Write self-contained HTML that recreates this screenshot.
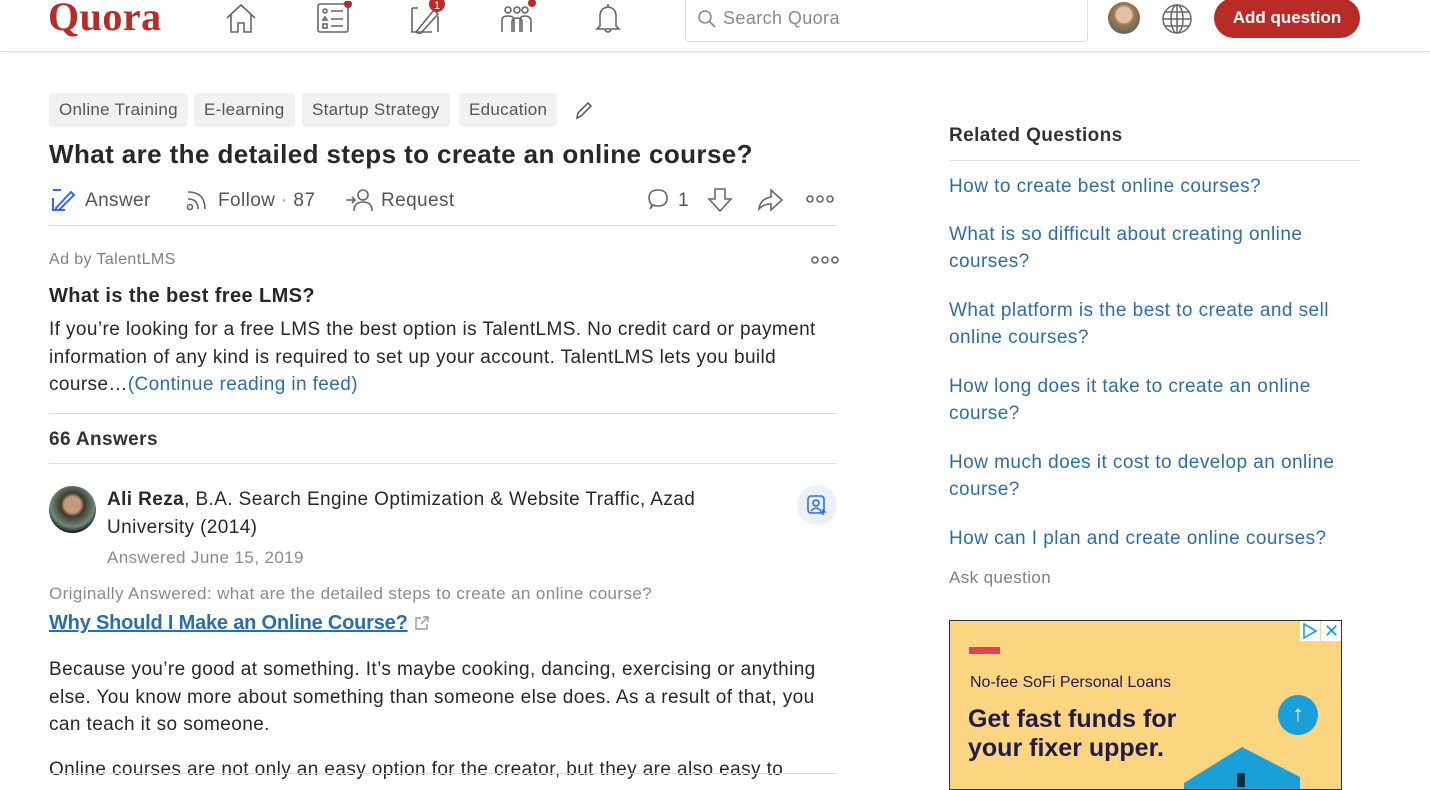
<!DOCTYPE html>
<html><head><meta charset="utf-8"><style>
*{box-sizing:border-box;margin:0;padding:0}
body{width:1430px;height:778px;overflow:hidden;background:#fff;font-family:"Liberation Sans",sans-serif;color:#282829;position:relative}
.a{position:absolute;white-space:nowrap}
.hdr{position:absolute;left:0;top:0;width:1430px;height:52px;border-bottom:1px solid #dedede;box-shadow:0 2px 3px rgba(0,0,0,.05);background:#fff}
.tag{position:absolute;top:93px;height:34px;background:#f1f1f2;border-radius:4px;font-size:17px;color:#555;line-height:34px;padding:0 10px;letter-spacing:0.3px}
.rq{position:absolute;left:949px;font-size:19px;color:#2b6dad;line-height:27px;width:400px;letter-spacing:0.45px}
.hr{position:absolute;height:1px;background:#dedede}
.t{letter-spacing:0.4px}
svg{position:absolute}
</style></head><body>
<div class="hdr"></div>
<div class="a" style="left:48px;top:-7px;font-family:'Liberation Serif',serif;font-weight:bold;font-size:40px;color:#b92b27;letter-spacing:0.5px">Quora</div>
<svg style="left:224px;top:2px" width="34" height="32" viewBox="0 0 34 32" fill="none" stroke="#666" stroke-width="1.6"><path d="M3 16 L17 3 L31 16 M7 12 V30 H14 V21 H20 V30 H27 V12"/></svg>
<svg style="left:316px;top:1px" width="36" height="34" viewBox="0 0 36 34" fill="none" stroke="#666" stroke-width="1.6"><rect x="2" y="3" width="30" height="28" rx="2"/><circle cx="9" cy="10" r="2"/><path d="M7 19h4l-2-3z"/><rect x="7" y="23" width="4" height="4"/><path d="M15 10h12M15 18h12M15 25h12"/><circle cx="32" cy="3" r="4" fill="#b92b27" stroke="none"/></svg>
<svg style="left:408px;top:0" width="42" height="34" viewBox="0 0 42 34" fill="none" stroke="#666" stroke-width="1.6"><path d="M4 8v24h20M4 8h6M30 16v16"/><path d="M8 32 L26 10 L30 14 L12 34z"/><circle cx="29" cy="4" r="8" fill="#b92b27" stroke="none"/><text x="26" y="9" font-size="11" fill="#fff" stroke="none" font-family="Liberation Sans">1</text></svg>
<svg style="left:499px;top:0" width="42" height="34" viewBox="0 0 42 34" fill="none" stroke="#666" stroke-width="1.6"><circle cx="9" cy="10" r="3"/><circle cx="18" cy="10" r="3"/><circle cx="26" cy="10" r="3"/><path d="M3 32V20q0-4 6-4t6 4v12M13 32V22q0-4 5-4t5 4v10M21 32V20q0-4 5-4t6 4v12"/><circle cx="33" cy="3" r="4" fill="#b92b27" stroke="none"/></svg>
<svg style="left:592px;top:2px" width="32" height="32" viewBox="0 0 32 32" fill="none" stroke="#666" stroke-width="1.6"><path d="M8 24V14q0-8 8-9 8 1 8 9v10l3 3H5z"/><path d="M13 28q3 4 6 0"/><path d="M16 2v3"/></svg>
<div class="a" style="left:685px;top:-4px;width:403px;height:46px;border:1px solid #dedede;border-radius:4px"></div>
<svg style="left:697px;top:9px" width="20" height="20" viewBox="0 0 20 20" fill="none" stroke="#888" stroke-width="1.6"><circle cx="8" cy="8" r="6"/><path d="M12.5 12.5L18 18"/></svg>
<div class="a t" style="left:723px;top:8px;font-size:18px;color:#8a8a8a">Search Quora</div>
<div class="a" style="left:1108px;top:2px;width:32px;height:32px;border-radius:50%;background:radial-gradient(circle at 50% 40%,#e3c1a5 0 30%,#a47650 40%,#4f6d62 80%)"></div>
<svg style="left:1161px;top:3px" width="32" height="32" viewBox="0 0 32 32" fill="none" stroke="#666" stroke-width="1.5"><circle cx="16" cy="16" r="14"/><ellipse cx="16" cy="16" rx="6" ry="14"/><path d="M2 16h28M4 9h24M4 23h24M16 2v28"/></svg>
<div class="a" style="left:1214px;top:-2px;width:146px;height:40px;border-radius:20px;background:#b92b27;color:#fff;font-weight:bold;font-size:17px;text-align:center;line-height:40px">Add question</div>

<div class="tag" style="left:49px">Online Training</div>
<div class="tag" style="left:194px">E-learning</div>
<div class="tag" style="left:302px">Startup Strategy</div>
<div class="tag" style="left:459px">Education</div>
<svg style="left:574px;top:100px" width="20" height="20" viewBox="0 0 20 20" fill="none" stroke="#555" stroke-width="1.5"><path d="M3 18l1-5L14 3l3 3L7 16z"/></svg>
<div class="a" style="left:49px;top:139px;font-size:26px;font-weight:bold;color:#282829;letter-spacing:0.4px">What are the detailed steps to create an online course?</div>

<svg style="left:51px;top:188px" width="26" height="24" viewBox="0 0 26 24" fill="none" stroke="#2e69ff" stroke-width="2"><path d="M2 10V22H14M2 2h8"/><path d="M5 20L20 4l3 3L8 22H5z"/></svg>
<div class="a t" style="left:85px;top:190px;font-size:19px;color:#555">Answer</div>
<svg style="left:185px;top:188px" width="24" height="24" viewBox="0 0 24 24" fill="none" stroke="#666" stroke-width="1.6"><circle cx="5" cy="19" r="2.5"/><path d="M3 11q10 0 10 10M3 4q17 0 17 17"/></svg>
<div class="a t" style="left:218px;top:190px;font-size:19px;color:#555">Follow <span style="color:#999">·</span> 87</div>
<svg style="left:345px;top:188px" width="28" height="24" viewBox="0 0 28 24" fill="none" stroke="#666" stroke-width="1.6"><path d="M1 12h9M7 9l3 3-3 3"/><circle cx="18" cy="7" r="5"/><path d="M9 23q0-9 9-9t9 9"/></svg>
<div class="a t" style="left:381px;top:190px;font-size:19px;color:#555">Request</div>
<svg style="left:646px;top:188px" width="26" height="24" viewBox="0 0 26 24" fill="none" stroke="#666" stroke-width="1.6"><path d="M4 21l2-4q-3-3-3-7 0-8 9-8t9 8-9 8q-3 0-5-1z"/></svg>
<div class="a" style="left:678px;top:190px;font-size:19px;color:#555">1</div>
<svg style="left:706px;top:187px" width="28" height="26" viewBox="0 0 28 26" fill="none" stroke="#666" stroke-width="1.6"><path d="M9 2h10v10h6L14 24 3 12h6z"/></svg>
<svg style="left:756px;top:187px" width="28" height="26" viewBox="0 0 28 26" fill="none" stroke="#666" stroke-width="1.6"><path d="M15 3l11 10-11 10v-6q-8 0-12 5 1-10 12-12z"/></svg>
<svg style="left:806px;top:193px" width="28" height="12" viewBox="0 0 28 12" fill="none" stroke="#666" stroke-width="1.6"><circle cx="4" cy="6" r="3"/><circle cx="14" cy="6" r="3"/><circle cx="24" cy="6" r="3"/></svg>
<div class="hr" style="left:49px;top:225px;width:788px"></div>

<div class="a t" style="left:49px;top:251px;font-size:16px;color:#808080">Ad by TalentLMS</div>
<svg style="left:811px;top:254px" width="28" height="12" viewBox="0 0 28 12" fill="none" stroke="#666" stroke-width="1.6"><circle cx="4" cy="6" r="3"/><circle cx="14" cy="6" r="3"/><circle cx="24" cy="6" r="3"/></svg>
<div class="a t" style="left:49px;top:285px;font-size:20px;font-weight:bold">What is the best free LMS?</div>
<div class="a t" style="left:49px;top:316px;font-size:19px;line-height:27.5px;white-space:normal;width:800px">If you’re looking for a free LMS the best option is TalentLMS. No credit card or payment information of any kind is required to set up your account. TalentLMS lets you build course…<span style="color:#2b6dad">(Continue reading in feed)</span></div>
<div class="hr" style="left:49px;top:413px;width:788px"></div>
<div class="a t" style="left:49px;top:429px;font-size:19px;font-weight:bold;color:#333">66 Answers</div>
<div class="hr" style="left:49px;top:463px;width:788px"></div>

<div class="a" style="left:49px;top:486px;width:47px;height:47px;border-radius:50%;background:radial-gradient(circle at 50% 40%,#c49a7a 0 22%,#3d3a2a 32%,#6f8a7a 60%,#1b1b1b 75%)"></div>
<div class="a t" style="left:107px;top:486px;font-size:19px;line-height:28px;white-space:normal;width:620px"><b>Ali Reza</b>, B.A. Search Engine Optimization &amp; Website Traffic, Azad University (2014)</div>
<div class="a t" style="left:107px;top:548px;font-size:17px;color:#8a8a8a">Answered June 15, 2019</div>
<div class="a" style="left:797px;top:485px;width:40px;height:40px;border-radius:50%;background:#ebf0ff"></div>
<svg style="left:806px;top:494px" width="22" height="22" viewBox="0 0 22 22" fill="none" stroke="#2e69ff" stroke-width="1.6"><rect x="2" y="2" width="16" height="17" rx="3"/><circle cx="10" cy="9" r="3"/><path d="M5 17q5-6 10 0M17 15v6M14 18h6"/></svg>
<div class="a t" style="left:49px;top:584px;font-size:17px;color:#8a8a8a">Originally Answered: what are the detailed steps to create an online course?</div>
<div class="a" style="left:49px;top:612px;font-size:20px;font-weight:bold;color:#2b6dad;text-decoration:underline;letter-spacing:-0.2px">Why Should I Make an Online Course?</div>
<svg style="left:414px;top:615px" width="16" height="16" viewBox="0 0 16 16" fill="none" stroke="#999" stroke-width="1.4"><path d="M7 3H2v11h11V9M9 2h5v5M14 2L7 9"/></svg>
<div class="a t" style="left:49px;top:656px;font-size:19px;line-height:27.5px;white-space:normal;width:800px">Because you’re good at something. It’s maybe cooking, dancing, exercising or anything else. You know more about something than someone else does. As a result of that, you can teach it so someone.</div>
<div class="a t" style="left:49px;top:759px;font-size:19px">Online courses are not only an easy option for the creator, but they are also easy to</div>
<div class="hr" style="left:49px;top:773px;width:788px"></div>

<div class="a t" style="left:949px;top:125px;font-size:19px;font-weight:bold;color:#333">Related Questions</div>
<div class="hr" style="left:949px;top:160px;width:411px"></div>
<div class="rq" style="top:173px">How to create best online courses?</div>
<div class="rq" style="top:221px">What is so difficult about creating online courses?</div>
<div class="rq" style="top:297px">What platform is the best to create and sell online courses?</div>
<div class="rq" style="top:373px">How long does it take to create an online course?</div>
<div class="rq" style="top:449px">How much does it cost to develop an online course?</div>
<div class="rq" style="top:525px">How can I plan and create online courses?</div>
<div class="a t" style="left:949px;top:568px;font-size:17px;color:#808080">Ask question</div>

<div class="a" style="left:949px;top:620px;width:393px;height:170px;background:#fcd581;border:1px solid #333;overflow:hidden">
  <div class="a" style="left:350px;top:0;width:20px;height:20px;background:#fff"></div>
  <div class="a" style="left:371px;top:0;width:21px;height:20px;background:#fff;color:#1aa0d8;font-size:18px;text-align:center;line-height:20px">✕</div>
  <svg style="left:352px;top:2px" width="16" height="16" viewBox="0 0 16 16" fill="none" stroke="#1aa0d8" stroke-width="1.6"><path d="M2 1l12 7-12 7z"/></svg>
  <div class="a" style="left:19px;top:26px;width:31px;height:7px;background:#e0424e"></div>
  <div class="a" style="left:20px;top:53px;font-size:16px;color:#1f1b4a">No-fee SoFi Personal Loans</div>
  <div class="a" style="left:18px;top:84px;font-size:25px;font-weight:bold;color:#1f1b4a;line-height:29px">Get fast funds for<br>your fixer upper.</div>
  <div class="a" style="left:328px;top:74px;width:40px;height:40px;border-radius:50%;background:#1aa0d8;color:#fff;font-size:22px;text-align:center;line-height:38px;font-weight:bold">↑</div>
  <svg style="left:230px;top:112px" width="140" height="60" viewBox="0 0 140 60"><path d="M4 50 L62 14 L120 44 L120 60 L4 60z" fill="#1aa0d8"/><rect x="57" y="40" width="8" height="14" fill="#0d2a3e"/></svg>
</div>
</body></html>
